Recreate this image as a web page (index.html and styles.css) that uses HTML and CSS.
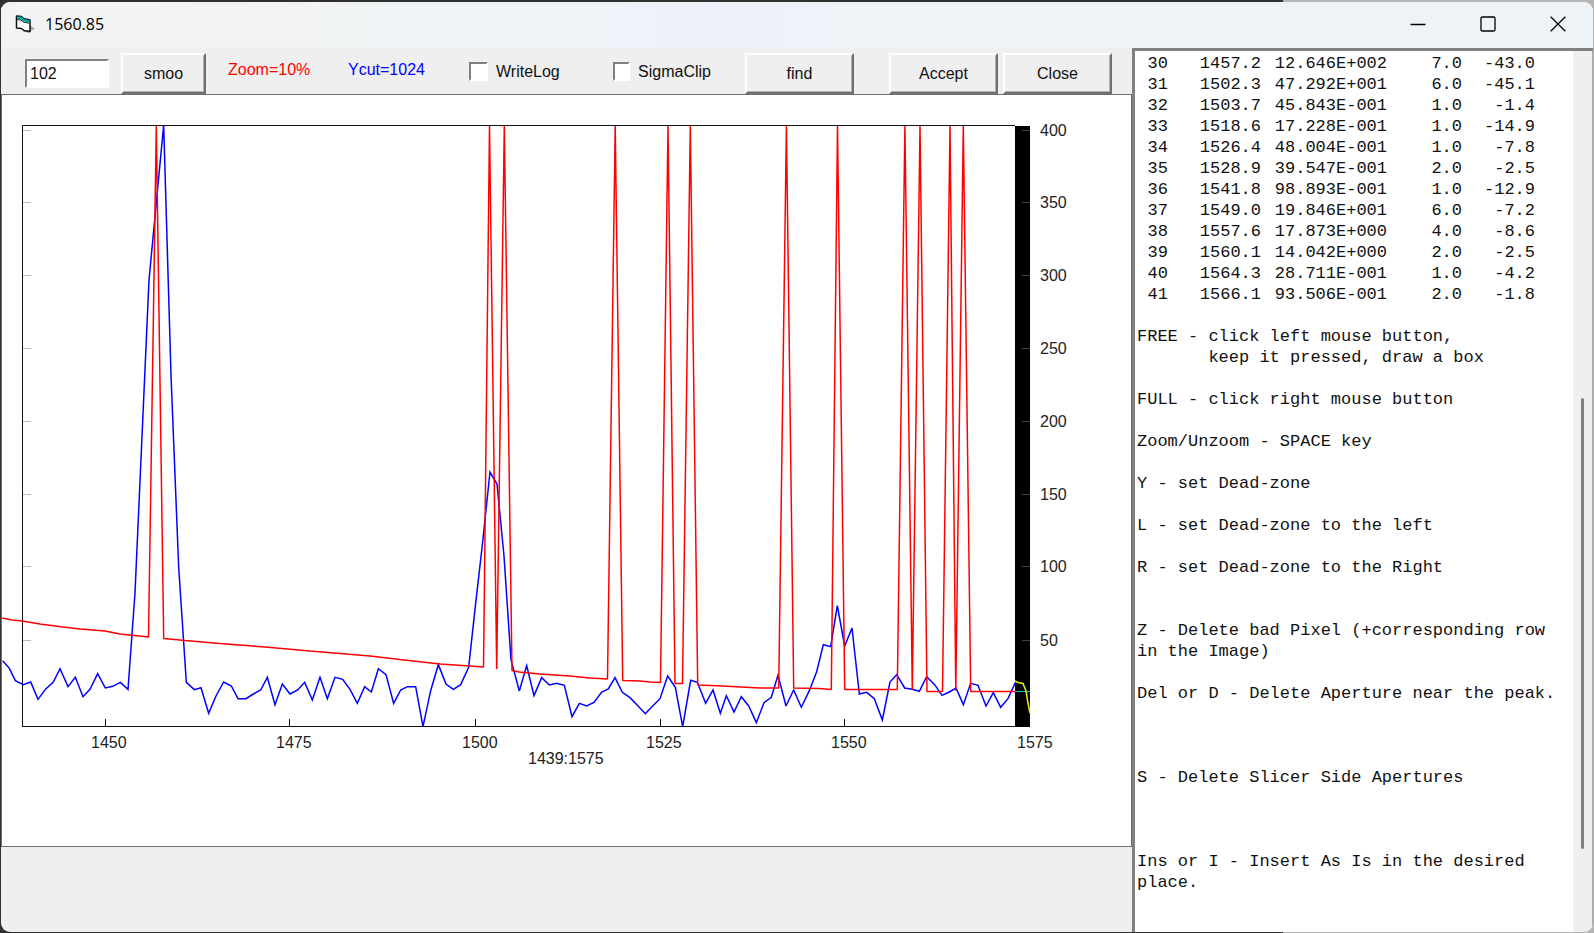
FILE: index.html
```html
<!DOCTYPE html>
<html lang="en">
<head>
<meta charset="utf-8">
<title>1560.85</title>
<link rel="stylesheet" href="styles.css">
</head>
<body>
<div class="window">
  <header class="titlebar">
    <svg class="app-icon" width="20" height="20" viewBox="0 0 20 20" aria-hidden="true">
      <path d="M15.500 11.500l4.500 3.500-3.500 1.500-2 2.500-7-1.500z" fill="#aaa"/>
      <path d="M1.500 2l5 .5 2 2 6.500 1.500v11.500l-6-1-2.500-2-5-.5z" fill="#fff" stroke="#111" stroke-width="1.500" stroke-linejoin="round"/>
      <path d="M2.200 3.500l4 .5 2 2 6.300 1.500" fill="none" stroke="#00a5a5" stroke-width="2.400"/>
      <path d="M2 5.500l4 .5 2 2 6.500 1.300" fill="none" stroke="#222" stroke-width="1"/>
    </svg>
    <h1 class="title">1560.85</h1>
    <div class="controls">
      <button class="control" type="button" aria-label="Minimize"><svg width="16" height="16" viewBox="0 0 16 16"><path d="M.5 8.500h15"/></svg></button>
      <button class="control" type="button" aria-label="Maximize"><svg width="16" height="16" viewBox="0 0 16 16"><rect x="1" y="1" width="14" height="14" rx="1.500"/></svg></button>
      <button class="control" type="button" aria-label="Close window"><svg width="16" height="16" viewBox="0 0 16 16"><path d="M.7.700l14.600 14.600M15.300.700L.7 15.300"/></svg></button>
    </div>
  </header>
  <div class="client">
    <main class="work">
      <form class="toolbar">
        <input class="field" type="text" value="102" aria-label="Smoothing">
        <button class="btn btn-small" type="button">smoo</button>
        <span class="readout red">Zoom=10%</span>
        <span class="readout blue">Ycut=1024</span>
        <label class="check"><input type="checkbox">WriteLog</label>
        <label class="check check-wide"><input type="checkbox">SigmaClip</label>
        <button class="btn btn-find" type="button">find</button>
        <button class="btn btn-accept" type="button">Accept</button>
        <button class="btn btn-close" type="button">Close</button>
      </form>
      <section class="canvas">
        <svg class="chart" viewBox="2 95 1129 751" preserveAspectRatio="xMinYMin meet" role="img" aria-label="Spectrum 1439 to 1575">
          <rect x="1015" y="126" width="15" height="601" fill="#000"/>
          <path class="axis" d="M1015 125.500H22.500V727M22 726.500H1015M105.500 719v8M289.500 719v8M475.500 719v8M660.500 719v8M844.500 719v8"/>
          <path class="tick" d="M23 130.500h8M23 202.500h8M23 275.500h8M23 348.500h8M23 421.500h8M23 494.500h8M23 566.500h8M23 640.500h8"/>
          <path class="tick-dark" d="M1022 130.500h8M1022 202.500h8M1022 275.500h8M1022 348.500h8M1022 421.500h8M1022 494.500h8M1022 566.500h8M1022 640.500h8"/>
          <g class="series-blue">
            <polyline transform="translate(0 560) scale(.33333)" points="8,302 28,325 46,362 70,374 92,366 114,418 138,386 160,366 180,326 204,380 226,352 249,410 270,388 293,341 316,384 338,379 361,367 384,388 405,99 447,-840 491,-1305 513,-555 536,21 559,367 583,389 603,383 626,460 648,408 671,366 694,378 714,416 738,416 760,402 782,390 802,352 825,434 847,372 870,402 893,390 914,367 937,420 960,352 982,416 1005,352 1028,358 1050,388 1072,430 1094,380 1114,396 1135,326 1158,344 1181,430 1202,390 1222,380 1247,380 1269,500 1292,392 1315,314 1338,372 1360,388 1382,374 1406,322 1427,130 1447,-45 1470,-264 1491,-228 1512,-12 1533,300 1558,393"/>
            <polyline transform="translate(450 560) scale(.33333)" points="208,393 230,317 252,407 275,353 298,375 320,370 343,376 366,470 388,430 410,438 432,427 455,396 475,387 495,353 517,397 540,413 562,436 586,461 608,438 630,416 653,348 676,382 698,500 722,361 742,367 767,430 789,390 811,460 829,407 852,456 874,410 896,438 919,488 942,428 964,412 984,346 1008,438"/>
            <polyline transform="translate(780 560) scale(.33333)" points="18,438 41,390 64,442 88,392 110,335 130,254 152,260 172,137 194,258 216,204 238,402 260,397 283,416 307,480 330,366 350,344 374,384 397,388 418,394 440,350 464,374 486,406 508,396 528,384 550,434 572,370 594,376 618,438 640,398 662,442 684,416 706,368"/>
          </g>
          <polyline class="series-red" points="2,618 12,620 22,621 40,624 63,627 80,629 105,631 120,634 148.500,637 156.300,126 163.700,638.500 185,640.500 220,643.500 265,647 310,651 370,656 400,659.500 440,664 470,666 483.500,667 489.500,126 496.700,669 504.300,126 512,670.500 519,672 540,674 570,676 590,678 607.500,679 615.200,126 622.700,680.500 640,681 650,682 660.500,682.500 668,126 675,683.500 682.500,683.500 690.300,126 697.700,685 723,686 760,688 778.700,688 786.400,126 793.700,688 819,688.500 831.300,689.500 837.500,126 844.700,689.500 897.300,689.500 904.900,126 912.300,689.500 920,126 927,691.400 942.500,691.400 950,126 955.800,691 963.300,126 970.700,691.400 1015,691.400"/>
          <path class="cyan" d="M1015 691.500h15"/>
          <polyline class="yellow" points="1015,681 1018,682.500 1023,683.500 1026,691 1028,703 1030,713"/>
          <g class="labels">
            <text x="1040" y="136">400</text>
            <text x="1040" y="208">350</text>
            <text x="1040" y="281">300</text>
            <text x="1040" y="354">250</text>
            <text x="1040" y="427">200</text>
            <text x="1040" y="500">150</text>
            <text x="1040" y="572">100</text>
            <text x="1040" y="646">50</text>
            <text x="91" y="748">1450</text>
            <text x="276" y="748">1475</text>
            <text x="462" y="748">1500</text>
            <text x="646" y="748">1525</text>
            <text x="831" y="748">1550</text>
            <text x="1017" y="748">1575</text>
            <text x="528" y="764">1439:1575</text>
          </g>
        </svg>
      </section>
    </main>
    <aside class="panel">
      <div class="log">
        <table class="peaks">
          <colgroup><col class="c-id"><col class="c-pos"><col class="c-flux"><col class="c-width"><col class="c-step"></colgroup>
          <tbody>
          <tr><td>30</td><td>1457.2</td><td>12.646E+002</td><td>7.0</td><td>-43.0</td></tr>
          <tr><td>31</td><td>1502.3</td><td>47.292E+001</td><td>6.0</td><td>-45.1</td></tr>
          <tr><td>32</td><td>1503.7</td><td>45.843E-001</td><td>1.0</td><td>-1.4</td></tr>
          <tr><td>33</td><td>1518.6</td><td>17.228E-001</td><td>1.0</td><td>-14.9</td></tr>
          <tr><td>34</td><td>1526.4</td><td>48.004E-001</td><td>1.0</td><td>-7.8</td></tr>
          <tr><td>35</td><td>1528.9</td><td>39.547E-001</td><td>2.0</td><td>-2.5</td></tr>
          <tr><td>36</td><td>1541.8</td><td>98.893E-001</td><td>1.0</td><td>-12.9</td></tr>
          <tr><td>37</td><td>1549.0</td><td>19.846E+001</td><td>6.0</td><td>-7.2</td></tr>
          <tr><td>38</td><td>1557.6</td><td>17.873E+000</td><td>4.0</td><td>-8.6</td></tr>
          <tr><td>39</td><td>1560.1</td><td>14.042E+000</td><td>2.0</td><td>-2.5</td></tr>
          <tr><td>40</td><td>1564.3</td><td>28.711E-001</td><td>1.0</td><td>-4.2</td></tr>
          <tr><td>41</td><td>1566.1</td><td>93.506E-001</td><td>2.0</td><td>-1.8</td></tr>
          </tbody>
        </table>
<pre class="help">
FREE - click left mouse button,
       keep it pressed, draw a box

FULL - click right mouse button

Zoom/Unzoom - SPACE key

Y - set Dead-zone

L - set Dead-zone to the left

R - set Dead-zone to the Right


Z - Delete bad Pixel (+corresponding row
in the Image)

Del or D - Delete Aperture near the peak.



S - Delete Slicer Side Apertures



Ins or I - Insert As Is in the desired
place.</pre>
      </div>
      <div class="scrollbar"><div class="thumb"></div></div>
    </aside>
  </div>
</div>
</body>
</html>
```
FILE: styles.css
```css
* { box-sizing: border-box; }

html, body { height: 100%; margin: 0; }

body {
  display: flex;
  padding: 2px 1px 1px 1px;
  background: linear-gradient(90deg, #303030 80.5%, #b4b4b4 80.5%);
  font-family: "Liberation Sans", Arial, sans-serif;
  font-size: 16px;
  color: #111;
}

.window {
  flex: 1;
  min-width: 0;
  display: flex;
  flex-direction: column;
  overflow: hidden;
  border-radius: 9px;
  background: #efefef;
}

.titlebar {
  display: flex;
  align-items: center;
  height: 46px;
  flex: none;
  padding: 0 0 2px 14px;
  background: linear-gradient(90deg, #f3f3f3 0%, #f1f3f4 20%, #edf3f7 36%, #edf2fa 45%, #edf3f7 55%);
}

.title {
  flex: 1;
  margin: 0 0 0 10px;
  font: 400 16px/24px "Open Sans", "Noto Sans", sans-serif;
  color: #000;
}

.controls { display: flex; height: 100%; }

.control {
  display: flex;
  align-items: center;
  justify-content: center;
  width: 70px;
  padding: 0;
  border: 0;
  background: none;
}

.control svg { fill: none; stroke: #000; stroke-width: 1.3; }

.client {
  flex: 1;
  min-height: 0;
  display: grid;
  grid-template-columns: 1131fr 461fr;
}

.work {
  min-width: 0;
  min-height: 0;
  display: grid;
  grid-template-rows: 46px minmax(0, 753fr) 85fr;
}

.toolbar {
  display: flex;
  align-items: center;
  padding: 5px 0 0 24px;
  white-space: nowrap;
}

.field {
  width: 84px;
  height: 29px;
  padding: 0 3px;
  border: 2px solid;
  border-color: #808080 #fff #fff #808080;
  border-radius: 0;
  background: #fff;
  font: inherit;
  color: #111;
}

.btn {
  align-self: stretch;
  width: 109px;
  padding: 0;
  border: 2px solid;
  border-color: #fff #707070 #707070 #fff;
  border-radius: 0;
  background: #efefef;
  box-shadow: inset -1px -1px #b0b0b0;
  font: inherit;
  color: #111;
}

.btn-small { width: 85px; margin-left: 12px; }
.btn-find { margin-left: 34px; }
.btn-accept { margin-left: 35px; }
.btn-close { margin-left: 5px; }

.readout { align-self: flex-start; line-height: 34px; width: 100px; margin-left: 20px; }
.red { margin-left: 22px; color: #f00; }
.blue { color: #00f; }

.check {
  align-self: flex-start;
  display: flex;
  align-items: center;
  gap: 8px;
  height: 37px;
  margin-left: 21px;
  width: 123px;
}

.check-wide { width: 98px; }

.check input {
  appearance: none;
  width: 19px;
  height: 19px;
  margin: 0;
  border: 2px solid;
  border-color: #808080 #fff #fff #808080;
  background: #fff;
}

.canvas {
  border: 1px solid #707070;
  background: #fff;
}

.chart { display: block; width: 100%; height: 100%; }
.chart path, .chart polyline { fill: none; stroke-width: 1; }
.chart .axis { stroke: #111; }
.chart .tick { stroke: #bbb; }
.chart .tick-dark { stroke: #444; }
.chart .series-blue polyline { stroke: #00f; stroke-width: 1.5; vector-effect: non-scaling-stroke; }
.chart .series-red { stroke: #f00; stroke-width: 1.5; stroke-linejoin: bevel; }
.chart .cyan { stroke: #0cc; }
.chart .yellow { stroke: #ee0; stroke-width: 1.5; }
.labels { font-size: 16px; fill: #222; }

.panel {
  min-width: 0;
  min-height: 0;
  display: grid;
  grid-template-columns: minmax(0, 1fr) 20px;
  border: 3px solid #808080;
  border-width: 3px 0 0 3px;
}

.log {
  overflow: hidden;
  padding: 2px 0 0 2px;
  background: #fff;
  font: 17px/21px "Liberation Mono", "Courier New", monospace;
}

.peaks { table-layout: fixed; width: 398px; border-collapse: collapse; }
.peaks td { padding: 0; text-align: right; }
.c-id { width: 31px; }
.c-pos { width: 93px; }
.c-flux { width: 126px; }
.c-width { width: 75px; }
.c-step { width: 73px; }

.help { margin: 21px 0 0; font: inherit; }

.scrollbar {
  display: grid;
  grid-template-rows: 347fr 451fr 83fr;
  justify-content: center;
  border-right: 1px solid #a8a8a8;
  background: #efefef;
}

.thumb { grid-row: 2; width: 3px; border-radius: 2px; background: #808080; }
```
